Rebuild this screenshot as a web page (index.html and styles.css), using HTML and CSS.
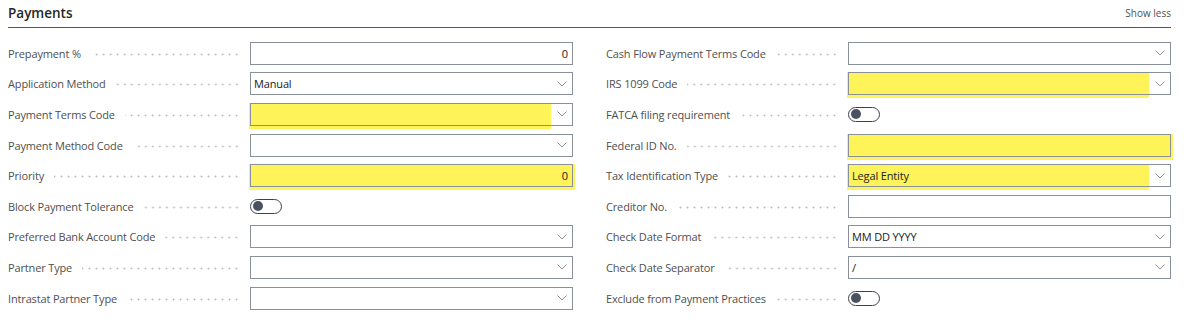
FILE: index.html
```html
<!DOCTYPE html>
<html lang="en">
<head>
    <meta charset="UTF-8">
    <meta name="viewport" content="width=device-width, initial-scale=1.0">
    <title>Vendor Card - Payments</title>
    <link rel="stylesheet" href="styles.css">
</head>
<body>
    <div class="page">
        <header class="section-head">
            <h2>Payments</h2>
            <a class="show-less">Show less</a>
        </header>

        <div class="columns">
            <!-- left column -->
            <div class="col">
                <div class="row">
                    <label>Prepayment %</label>
                    <div class="box num"><span class="value">0</span></div>
                </div>
                <div class="row">
                    <label>Application Method</label>
                    <div class="box select"><span class="value">Manual</span><span class="chev"><svg width="10" height="6" viewBox="0 0 10 6"><polyline points="0.5,0.5 5,5 9.5,0.5" /></svg></span></div>
                </div>
                <div class="row">
                    <label>Payment Terms Code</label>
                    <div class="box select hl"><span class="value"></span><span class="chev"><svg width="10" height="6" viewBox="0 0 10 6"><polyline points="0.5,0.5 5,5 9.5,0.5" /></svg></span></div>
                </div>
                <div class="row">
                    <label>Payment Method Code</label>
                    <div class="box select"><span class="value"></span><span class="chev"><svg width="10" height="6" viewBox="0 0 10 6"><polyline points="0.5,0.5 5,5 9.5,0.5" /></svg></span></div>
                </div>
                <div class="row">
                    <label>Priority</label>
                    <div class="box num hl"><span class="value">0</span></div>
                </div>
                <div class="row">
                    <label>Block Payment Tolerance</label>
                    <div class="toggle"><span class="knob"></span></div>
                </div>
                <div class="row">
                    <label>Preferred Bank Account Code</label>
                    <div class="box select"><span class="value"></span><span class="chev"><svg width="10" height="6" viewBox="0 0 10 6"><polyline points="0.5,0.5 5,5 9.5,0.5" /></svg></span></div>
                </div>
                <div class="row">
                    <label>Partner Type</label>
                    <div class="box select"><span class="value"></span><span class="chev"><svg width="10" height="6" viewBox="0 0 10 6"><polyline points="0.5,0.5 5,5 9.5,0.5" /></svg></span></div>
                </div>
                <div class="row">
                    <label>Intrastat Partner Type</label>
                    <div class="box select"><span class="value"></span><span class="chev"><svg width="10" height="6" viewBox="0 0 10 6"><polyline points="0.5,0.5 5,5 9.5,0.5" /></svg></span></div>
                </div>
            </div>

            <!-- right column -->
            <div class="col">
                <div class="row">
                    <label>Cash Flow Payment Terms Code</label>
                    <div class="box select"><span class="value"></span><span class="chev"><svg width="10" height="6" viewBox="0 0 10 6"><polyline points="0.5,0.5 5,5 9.5,0.5" /></svg></span></div>
                </div>
                <div class="row">
                    <label>IRS 1099 Code</label>
                    <div class="box select hl"><span class="value"></span><span class="chev"><svg width="10" height="6" viewBox="0 0 10 6"><polyline points="0.5,0.5 5,5 9.5,0.5" /></svg></span></div>
                </div>
                <div class="row">
                    <label>FATCA filing requirement</label>
                    <div class="toggle"><span class="knob"></span></div>
                </div>
                <div class="row">
                    <label>Federal ID No.</label>
                    <div class="box hl"><span class="value"></span></div>
                </div>
                <div class="row">
                    <label>Tax Identification Type</label>
                    <div class="box select hl"><span class="value">Legal Entity</span><span class="chev"><svg width="10" height="6" viewBox="0 0 10 6"><polyline points="0.5,0.5 5,5 9.5,0.5" /></svg></span></div>
                </div>
                <div class="row">
                    <label>Creditor No.</label>
                    <div class="box"><span class="value"></span></div>
                </div>
                <div class="row">
                    <label>Check Date Format</label>
                    <div class="box select"><span class="value">MM DD YYYY</span><span class="chev"><svg width="10" height="6" viewBox="0 0 10 6"><polyline points="0.5,0.5 5,5 9.5,0.5" /></svg></span></div>
                </div>
                <div class="row">
                    <label>Check Date Separator</label>
                    <div class="box select"><span class="value">/</span><span class="chev"><svg width="10" height="6" viewBox="0 0 10 6"><polyline points="0.5,0.5 5,5 9.5,0.5" /></svg></span></div>
                </div>
                <div class="row">
                    <label>Exclude from Payment Practices</label>
                    <div class="toggle"><span class="knob"></span></div>
                </div>
            </div>
        </div>
    </div>
</body>
</html>
```

FILE: styles.css
```css
* { box-sizing: border-box; margin: 0; padding: 0; }
body { background: #fff; color: #212121; font-family: 'Open Sans', 'Noto Sans', sans-serif; font-size: 11px; }
.page { padding: 0 15px 0 8px; }

/* section header */
.section-head { display: flex; justify-content: space-between; align-items: center; height: 28px;
        border-bottom: 1px solid #505a66; padding-bottom: 2px; }
.section-head h2 { font-size: 13.5px; font-weight: 600; color: #262626; }
.show-less { font-size: 10px; color: #505050; }

/* two column form */
.columns { display: grid; grid-template-columns: 1fr 1fr; column-gap: 33px; padding-top: 10px; }
.row { display: grid; grid-template-columns: 242px 1fr; align-items: center; height: 30.6px; }
.row label { display: flex; align-items: center; color: #4f4f4f; white-space: nowrap; letter-spacing: -0.15px; }
.row label::after { content: ""; flex: 1; height: 3px; margin: 2px 10px 0 10px;
        background-image: radial-gradient(circle, #bdbdbd 0.9px, transparent 1.1px);
        background-size: 7px 3px; background-repeat: repeat-x; background-position: right center; }

.box { position: relative; display: flex; align-items: center; height: 23px; border: 1px solid #8a9099;
        background: #fff; }
.box .value { flex: 1; padding: 0 3px; color: #212121; white-space: nowrap; letter-spacing: -0.15px; }
.box.num .value { text-align: right; padding-right: 4px; }
.chev { width: 21px; height: 100%; display: flex; align-items: center; justify-content: center; background: #fff; }
.chev svg { display: block; }
.chev polyline { fill: none; stroke: #8f949b; stroke-width: 1; }

/* yellow change highlight */
.box.hl { background: transparent; }
.box.hl::before { content: ""; position: absolute; top: -1px; left: -2px; bottom: -4px; right: -3px;
        background: #fff35a; z-index: -1; }
.box.select.hl::before { right: 21px; }

/* toggle */
.toggle { width: 32px; height: 15px; border: 1px solid #3b4250; border-radius: 8px; padding: 1.5px 2px;
        display: flex; align-items: center; }
.knob { width: 10px; height: 10px; border-radius: 50%; background: #4a5262; }
```
